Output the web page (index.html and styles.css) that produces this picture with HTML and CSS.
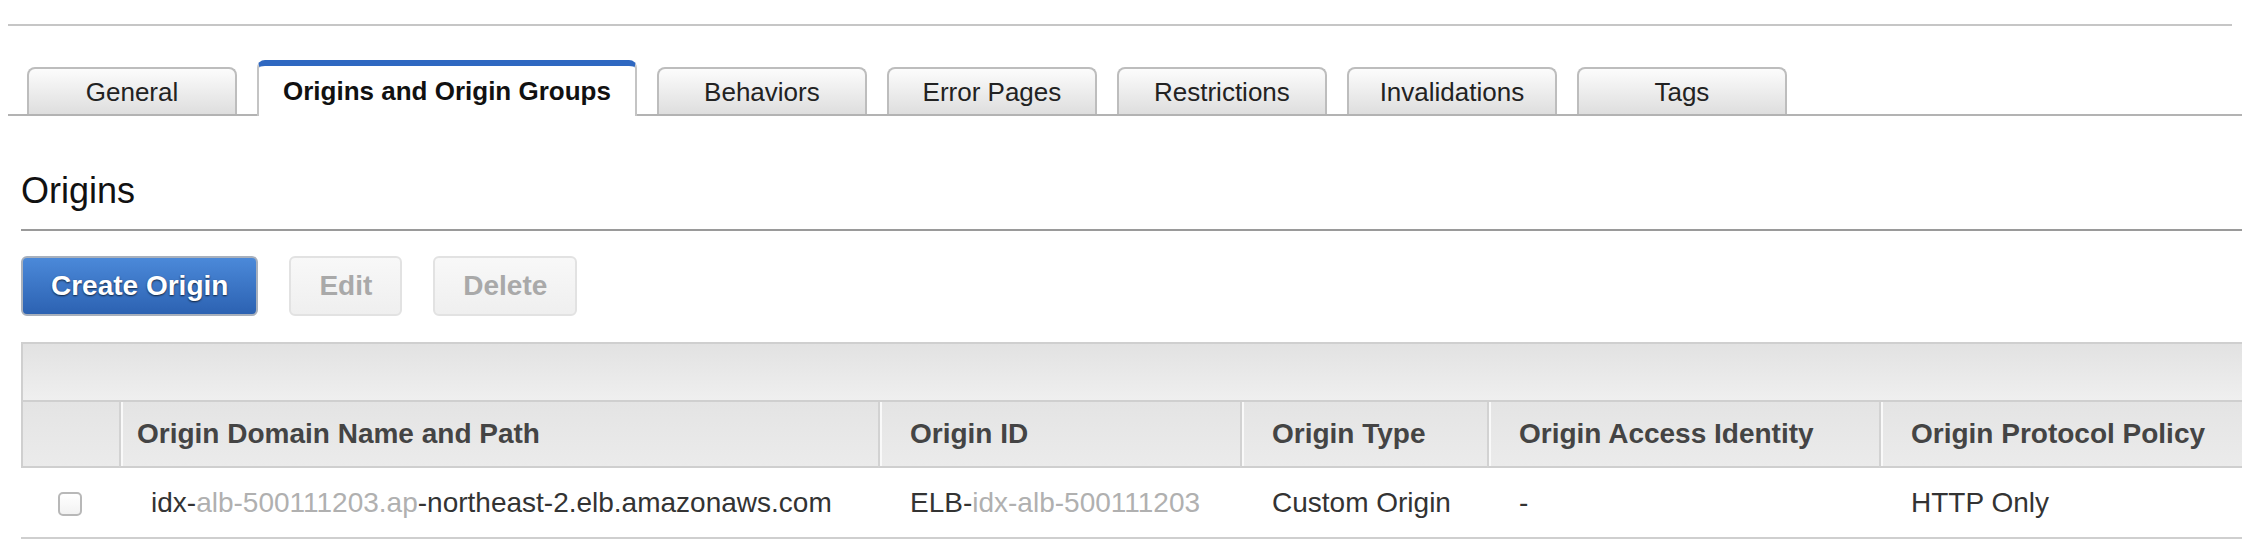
FILE: index.html
```html
<!DOCTYPE html>
<html lang="en">
<head>
<meta charset="utf-8">
<title>Origins and Origin Groups</title>
<link rel="stylesheet" href="styles.css">
</head>
<body>
<div class="topline"></div>
<nav class="tabs">
  <div class="tab">General</div>
  <div class="tab active">Origins and Origin Groups</div>
  <div class="tab">Behaviors</div>
  <div class="tab">Error Pages</div>
  <div class="tab">Restrictions</div>
  <div class="tab">Invalidations</div>
  <div class="tab">Tags</div>
</nav>
<main class="content">
  <h2 class="section-title">Origins</h2>
  <div class="actions">
    <button class="btn primary">Create Origin</button>
    <button class="btn disabled">Edit</button>
    <button class="btn disabled">Delete</button>
  </div>
  <table class="grid">
    <colgroup>
      <col class="c-sel">
      <col class="c-domain">
      <col class="c-id">
      <col class="c-type">
      <col class="c-oai">
      <col class="c-proto">
    </colgroup>
    <thead>
      <tr class="toolbar"><th colspan="6"></th></tr>
      <tr class="head">
        <th class="sel"></th>
        <th class="first">Origin Domain Name and Path</th>
        <th>Origin ID</th>
        <th>Origin Type</th>
        <th>Origin Access Identity</th>
        <th>Origin Protocol Policy</th>
      </tr>
    </thead>
    <tbody>
      <tr>
        <td class="sel"><span class="checkbox"></span></td>
        <td>idx-<span class="masked">alb-500111203.ap</span>-northeast-2.elb.amazonaws.com</td>
        <td>ELB-<span class="masked">idx-alb-500111203</span></td>
        <td>Custom Origin</td>
        <td>-</td>
        <td>HTTP Only</td>
      </tr>
    </tbody>
  </table>
</main>
</body>
</html>
```
FILE: styles.css
```css
* { box-sizing: border-box; }

body {
  margin: 0;
  background: #fff;
  font-family: "Liberation Sans", Arial, Helvetica, sans-serif;
  color: #222;
}

.topline {
  height: 2px;
  margin: 24px 24px 0 8px;
  background: #c6c6c6;
}

.tabs {
  display: flex;
  align-items: flex-end;
  gap: 20px;
  margin: 34px 14px 0 8px;
  padding-left: 19px;
  border-bottom: 2px solid #b3b3b3;
}

.tab {
  width: 210px;
  height: 47px;
  display: flex;
  align-items: center;
  justify-content: center;
  padding-top: 2px;
  font-size: 26px;
  color: #222;
  border: 2px solid #bdbdbd;
  border-bottom: none;
  border-radius: 8px 8px 0 0;
  background: linear-gradient(#fcfcfc, #dedede);
}

.tab.active {
  width: auto;
  height: 56px;
  padding: 1px 24px 0;
  margin-bottom: -2px;
  font-weight: bold;
  color: #111;
  background: #fff;
  border-top: 6px solid #2f68c1;
  border-left-color: #c4c4c4;
  border-right-color: #c4c4c4;
}

.content {
  padding: 0 14px 0 21px;
}

.section-title {
  margin: 54px 0 0;
  padding-bottom: 18px;
  font-size: 36px;
  line-height: 41px;
  font-weight: normal;
  color: #111;
  border-bottom: 2px solid #9a9a9a;
}

.actions {
  display: flex;
  gap: 31px;
  margin-top: 25px;
}

.btn {
  height: 60px;
  padding: 0 28px;
  font-family: inherit;
  font-size: 28px;
  font-weight: bold;
  border-radius: 6px;
  border: 2px solid #e2e2e2;
}

.btn.primary {
  color: #fff;
  border-color: #a8b0bc;
  background: linear-gradient(#4b89d9, #2c62b2);
  text-shadow: 0 1px 2px rgba(0, 0, 0, 0.7);
}

.btn.disabled {
  color: #a9a9a9;
  background: linear-gradient(#f8f8f8, #efefef);
}

.grid {
  width: 2221px;
  margin-top: 26px;
  table-layout: fixed;
  border-collapse: separate;
  border-spacing: 0;
  font-size: 28px;
}

.c-sel { width: 98px; }
.c-domain { width: 759px; }
.c-id { width: 362px; }
.c-type { width: 247px; }
.c-oai { width: 392px; }
.c-proto { width: 363px; }

.toolbar th {
  height: 60px;
  padding: 0;
  border-top: 2px solid #cfcfcf;
  border-left: 2px solid #cfcfcf;
  border-bottom: 2px solid #cfcfcf;
  background: linear-gradient(#e2e2e2, #efefef);
}

.head th {
  height: 66px;
  padding: 0 10px 0 30px;
  text-align: left;
  font-weight: bold;
  color: #444;
  white-space: nowrap;
  border-bottom: 2px solid #cfcfcf;
  border-left: 2px solid #d2d2d2;
  box-shadow: inset 2px 0 0 #f9f9f9;
  background: linear-gradient(#e4e4e4, #ebebeb);
}

.head th.sel {
  border-left-color: #cfcfcf;
  box-shadow: none;
}

.head th.first {
  padding-left: 16px;
}

td {
  height: 71px;
  padding: 0 10px 0 32px;
  color: #333;
  white-space: nowrap;
  border-bottom: 2px solid #cfcfcf;
}

td.sel {
  padding: 0;
  text-align: center;
}

.checkbox {
  display: inline-block;
  width: 24px;
  height: 24px;
  vertical-align: middle;
  border: 2px solid #b8b8b8;
  border-radius: 5px;
  background: linear-gradient(#fff, #f2f2f2);
}

.masked {
  color: #b0b0b0;
}
```
